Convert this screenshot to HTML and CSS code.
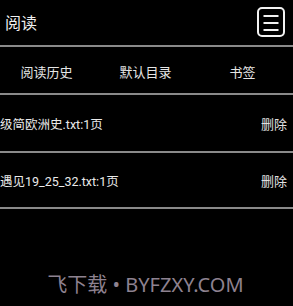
FILE: index.html
```html
<!DOCTYPE html>
<html lang="zh">
<head>
<meta charset="utf-8">
<link rel="stylesheet" href="styles.css">
</head>
<body>
<div class="app">
  <header class="header">
    <div class="title">阅读</div>
    <div class="menu-btn">
      <svg width="28" height="30" viewBox="0 0 28 30">
        <rect x="1" y="1" width="26" height="28" rx="4" ry="4" fill="none" stroke="#f2f2f2" stroke-width="2"/>
        <line x1="6.5" y1="9" x2="21.5" y2="9" stroke="#f2f2f2" stroke-width="2"/>
        <line x1="6.5" y1="16" x2="21.5" y2="16" stroke="#f2f2f2" stroke-width="2"/>
        <line x1="6.5" y1="23" x2="21.5" y2="23" stroke="#f2f2f2" stroke-width="2"/>
      </svg>
    </div>
  </header>
  <div class="divider"></div>
  <nav class="tabs">
    <div class="tab">阅读历史</div>
    <div class="tab">默认目录</div>
    <div class="tab">书签</div>
  </nav>
  <div class="divider"></div>
  <div class="row row-a">
    <div class="name">级简欧洲史.txt:1页</div>
    <div class="del">删除</div>
  </div>
  <div class="divider"></div>
  <div class="row row-b">
    <div class="name">遇见19_25_32.txt:1页</div>
    <div class="del">删除</div>
  </div>
  <div class="divider"></div>
  <div class="spacer"></div>
  <div class="watermark">飞下载 • BYFZXY.COM</div>
</div>
</body>
</html>
```

FILE: styles.css
```css
html, body {
  margin: 0;
  padding: 0;
  background: #000;
}
body {
  width: 293px;
  height: 306px;
  overflow: hidden;
  font-family: Roboto, "Noto Sans CJK SC", sans-serif;
  color: #eeeeee;
}
.app {
  display: flex;
  flex-direction: column;
  height: 306px;
}
.header {
  height: 45px;
  display: flex;
  align-items: center;
  justify-content: space-between;
  padding: 0 8px 0 5px;
}
.title {
  font-size: 16px;
  line-height: 20px;
  color: #f0f0f0;
  margin-top: 3px;
}
.menu-btn {
  width: 28px;
  height: 30px;
  display: flex;
  margin-top: -1px;
}
.divider {
  height: 2px;
  background: #8a8a8a;
  flex: none;
}
.tabs {
  height: 46px;
  display: grid;
  grid-template-columns: 1fr 1fr 1fr;
  align-items: center;
  padding: 0 2px 0 0;
}
.tab {
  text-align: center;
  font-size: 13px;
  color: #e6e6e6;
  padding-top: 2px;
}
.tab:first-child {
  padding-right: 4px;
}
.row {
  display: flex;
  align-items: center;
  justify-content: space-between;
  padding: 0 6px 0 0;
  font-size: 12.5px;
  color: #eaeaea;
}
.row-a { height: 56px; }
.row-b { height: 54px; }
.name {
  white-space: nowrap;
}
.del {
  font-size: 13px;
  color: #e0e0e0;
}
.spacer {
  flex: 1;
}
.watermark {
  text-align: center;
  font-family: "Noto Sans", "Noto Sans CJK SC", sans-serif;
  font-size: 20px;
  line-height: 22px;
  color: #8e8290;
  padding-bottom: 10px;
  padding-right: 2px;
}
```
